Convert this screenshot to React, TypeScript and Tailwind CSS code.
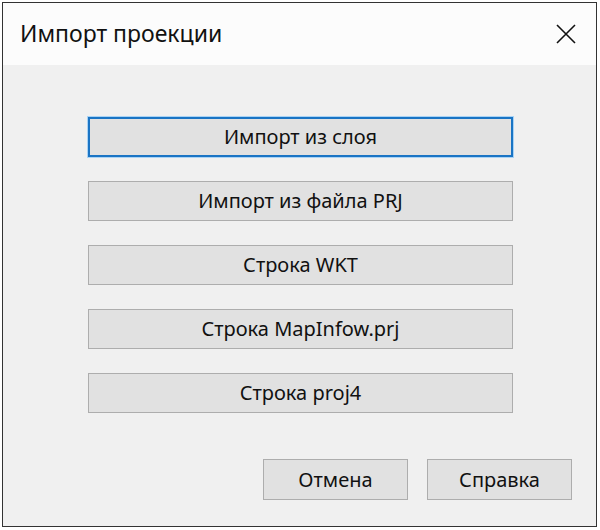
import React from "react";

const font = { fontFamily: '"Noto Sans", "Open Sans", sans-serif' };

function Btn({ label, focused }: { label: string; focused?: boolean }) {
  return (
    <div
      className={
        "h-[40px] w-[425px] flex items-center justify-center bg-[#e1e1e1] text-[20px] text-[#111] " +
        (focused ? "border-2 border-[#1a74c4] shadow-[0_0_0_1px_#a9d3f5]" : "border border-[#adadad]")
      }
    >
      {label}
    </div>
  );
}

export default function App() {
  return (
    <div className="w-[600px] h-[530px] bg-white pt-[2px] pl-[2px]" style={font}>
      <div className="w-[595px] h-[525px] border border-[#333] flex flex-col">
        <div className="h-[62px] bg-[#fcfcfc] flex items-center justify-between pl-[17px] pr-[19px] shrink-0">
          <span className="text-[23px] text-[#111] leading-none pb-[2px]">Импорт проекции</span>
          <svg width="22" height="22" viewBox="0 0 22 22">
            <path d="M2 2 L20 20 M20 2 L2 20" stroke="#111" strokeWidth="1.6" />
          </svg>
        </div>
        <div className="flex-1 bg-[#f0f0f0] flex flex-col">
          <div className="flex flex-col gap-[24px] pl-[85px] pt-[52px]">
            <Btn label="Импорт из слоя" focused />
            <Btn label="Импорт из файла PRJ" />
            <Btn label="Строка WKT" />
            <Btn label="Строка MapInfow.prj" />
            <Btn label="Строка proj4" />
          </div>
          <div className="flex justify-end gap-[19px] pr-[24px] mt-[46px]">
            <div className="h-[41px] w-[145px] flex items-center justify-center bg-[#e1e1e1] border border-[#adadad] text-[20px] text-[#111]">Отмена</div>
            <div className="h-[41px] w-[145px] flex items-center justify-center bg-[#e1e1e1] border border-[#adadad] text-[20px] text-[#111]">Справка</div>
          </div>
        </div>
      </div>
    </div>
  );
}
